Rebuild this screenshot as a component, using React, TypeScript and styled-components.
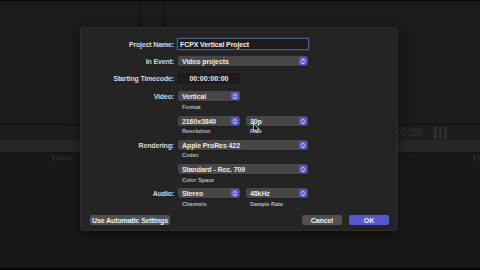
import React from "react";
import styled, { createGlobalStyle } from "styled-components";

const Global = createGlobalStyle`
  html, body { margin: 0; padding: 0; background: #1a1a1a; }
  body { font-family: "Liberation Sans", Arial, sans-serif; }
  * { box-sizing: border-box; }
`;

const Screen = styled.div`
  position: relative;
  width: 480px;
  height: 270px;
  overflow: hidden;
  display: flex;
  flex-direction: column;
  background: #1a1a1a;
`;

const Edge = styled.div<{ $h: number }>`
  height: ${(p) => p.$h}px;
  background: #050505;
  flex: none;
`;

const Viewer = styled.div`
  height: 124px;
  flex: none;
  display: grid;
  grid-template-columns: 140px 25px 1fr;
  background: #1b1b1b;
  border-bottom: 1px solid #111;
`;

const Pane = styled.div<{ $line?: boolean }>`
  border-right: ${(p) => (p.$line ? "1px solid #101010" : "none")};
`;

const Toolbar = styled.div`
  height: 15px;
  flex: none;
  background: #1d1d1d;
  display: flex;
  align-items: center;
  justify-content: flex-end;
  padding-right: 33px;
  gap: 12px;
`;

const GhostTime = styled.span`
  font-size: 10px;
  color: #323232;
  letter-spacing: 0.3px;
`;

const Bars = styled.div`
  display: flex;
  gap: 2px;
  height: 12px;
`;
const Bar = styled.div`
  width: 3px;
  background: #2e2e2e;
`;

const Ruler = styled.div`
  height: 13px;
  flex: none;
  background: #262626;
  border-bottom: 1px solid #141414;
`;

const Timeline = styled.div`
  flex: 1;
  background: #181818;
  display: flex;
  justify-content: space-between;
  padding: 2px 0 0 53px;
`;

const Tick = styled.span`
  font-size: 5px;
  color: #383838;
  border-left: 1px solid #383838;
  padding-left: 2px;
  height: 7px;
  line-height: 7px;
`;

const Dialog = styled.div`
  position: absolute;
  left: 80px;
  top: 27px;
  width: 318px;
  height: 204px;
  background: #242424;
  border-radius: 4px;
  box-shadow: 0 0 0 1px #2c2c2c inset, 0 4px 12px rgba(0, 0, 0, 0.5);
  padding: 11px 9px 0 0;
  display: flex;
  flex-direction: column;
`;

const Row = styled.div<{ $mt?: number; $h: number }>`
  display: grid;
  grid-template-columns: 94px 1fr;
  column-gap: 4px;
  align-items: center;
  height: ${(p) => p.$h}px;
  margin-top: ${(p) => p.$mt ?? 0}px;
`;

const Label = styled.div`
  font-size: 7px;
  font-weight: 700;
  color: #d8d8d8;
  text-align: right;
  white-space: nowrap;
  letter-spacing: -0.15px;
`;

const Controls = styled.div`
  display: flex;
  gap: 6px;
  align-items: center;
`;

const TextField = styled.div`
  width: 132px;
  height: 12px;
  margin-left: -1px;
  border: 1px solid #4a5f8f;
  box-shadow: 0 0 0 0.5px #2d3b5c;
  background: #1c1c1c;
  font-size: 7px;
  font-weight: 700;
  color: #f0f0f0;
  display: flex;
  align-items: center;
  padding-left: 2px;
  letter-spacing: -0.1px;
`;

const Timecode = styled.div`
  width: 62px;
  height: 11px;
  background: #1c1c1c;
  font-size: 7px;
  font-weight: 700;
  color: #ececec;
  display: flex;
  align-items: center;
  justify-content: center;
  letter-spacing: 0.1px;
`;

const PopupBox = styled.div<{ $w: number }>`
  width: ${(p) => p.$w}px;
  height: 10px;
  background: #474747;
  border-radius: 2px;
  display: flex;
  align-items: center;
  justify-content: space-between;
  padding: 0 1px 0 4px;
  font-size: 7px;
  font-weight: 700;
  color: #eaeaea;
  letter-spacing: -0.1px;
  box-shadow: 0 0.5px 0 rgba(0, 0, 0, 0.4);
`;

const Stepper = styled.div`
  width: 8px;
  height: 8px;
  border-radius: 2px;
  background: #5b5bd8;
  display: flex;
  align-items: center;
  justify-content: center;
`;

const Sub = styled.div<{ $mt?: number }>`
  display: grid;
  grid-template-columns: 62px 62px;
  column-gap: 6px;
  margin-left: 98px;
  margin-top: ${(p) => p.$mt ?? 0}px;
  height: 8px;
  align-items: center;
`;

const SubLabel = styled.span`
  font-size: 5.5px;
  font-weight: 700;
  color: #bcbcbc;
  padding-left: 4px;
  white-space: nowrap;
`;

const Footer = styled.div`
  display: flex;
  align-items: center;
  margin-top: 7px;
  padding-left: 10px;
  height: 10px;
  gap: 7px;
`;

const Button = styled.div<{ $w: number; $primary?: boolean }>`
  width: ${(p) => p.$w}px;
  height: 10px;
  border-radius: 2px;
  background: ${(p) => (p.$primary ? "#5757cf" : "#505050")};
  color: #f2f2f2;
  font-size: 7px;
  font-weight: 700;
  display: flex;
  align-items: center;
  justify-content: center;
  white-space: nowrap;
  letter-spacing: -0.1px;
`;

const Spacer = styled.div`
  flex: 1;
`;

const Cursor = styled.svg`
  position: absolute;
  left: 253px;
  top: 123px;
  width: 7px;
  height: 11px;
`;

const Chevrons = () => (
  <svg width="6" height="7" viewBox="0 0 6 7">
    <path d="M1.5 2.6 L3 1.2 L4.5 2.6 M1.5 4.4 L3 5.8 L4.5 4.4" stroke="#fff" strokeWidth="0.9" fill="none" strokeLinecap="round" strokeLinejoin="round" />
  </svg>
);

const Popup = ({ w, children }: { w: number; children: React.ReactNode }) => (
  <PopupBox $w={w}>
    <span>{children}</span>
    <Stepper>
      <Chevrons />
    </Stepper>
  </PopupBox>
);

export default function App() {
  return (
    <>
      <Global />
      <Screen>
        <Edge $h={1} />
        <Viewer>
          <Pane $line />
          <Pane $line />
          <Pane />
        </Viewer>
        <Toolbar>
          <GhostTime>00:00</GhostTime>
          <Bars>
            <Bar />
            <Bar />
            <Bar />
          </Bars>
        </Toolbar>
        <Ruler />
        <Timeline>
          <Tick>00:00:0</Tick>
          <Tick>0</Tick>
        </Timeline>
        <Edge $h={2} />

        <Dialog>
          <Row $h={12}>
            <Label>Project Name:</Label>
            <Controls>
              <TextField>FCPX Vertical Project</TextField>
            </Controls>
          </Row>
          <Row $h={10} $mt={6}>
            <Label>In Event:</Label>
            <Controls>
              <Popup w={130}>Video projects</Popup>
            </Controls>
          </Row>
          <Row $h={11} $mt={7}>
            <Label>Starting Timecode:</Label>
            <Controls>
              <Timecode>00:00:00:00</Timecode>
            </Controls>
          </Row>
          <Row $h={10} $mt={7}>
            <Label>Video:</Label>
            <Controls>
              <Popup w={62}>Vertical</Popup>
            </Controls>
          </Row>
          <Sub $mt={2}>
            <SubLabel>Format</SubLabel>
          </Sub>
          <Row $h={10} $mt={5}>
            <span />
            <Controls>
              <Popup w={62}>2160x3840</Popup>
              <Popup w={62}>30p</Popup>
            </Controls>
          </Row>
          <Sub $mt={1}>
            <SubLabel>Resolution</SubLabel>
            <SubLabel>Rate</SubLabel>
          </Sub>
          <Row $h={10} $mt={5}>
            <Label>Rendering:</Label>
            <Controls>
              <Popup w={130}>Apple ProRes 422</Popup>
            </Controls>
          </Row>
          <Sub $mt={1}>
            <SubLabel>Codec</SubLabel>
          </Sub>
          <Row $h={10} $mt={5}>
            <span />
            <Controls>
              <Popup w={130}>Standard - Rec. 709</Popup>
            </Controls>
          </Row>
          <Sub $mt={2}>
            <SubLabel>Color Space</SubLabel>
          </Sub>
          <Row $h={10} $mt={4}>
            <Label>Audio:</Label>
            <Controls>
              <Popup w={62}>Stereo</Popup>
              <Popup w={62}>48kHz</Popup>
            </Controls>
          </Row>
          <Sub $mt={2}>
            <SubLabel>Channels</SubLabel>
            <SubLabel>Sample Rate</SubLabel>
          </Sub>
          <Footer>
            <Button $w={80}>Use Automatic Settings</Button>
            <Spacer />
            <Button $w={40}>Cancel</Button>
            <Button $w={40} $primary>
              OK
            </Button>
          </Footer>
        </Dialog>

        <Cursor viewBox="0 0 7 11">
          <path d="M0.5 0.5 L0.5 8.5 L2.5 6.8 L3.8 9.8 L5 9.3 L3.8 6.4 L6.3 6.3 Z" fill="#111" stroke="#fff" strokeWidth="0.7" strokeLinejoin="round" />
        </Cursor>
      </Screen>
    </>
  );
}
